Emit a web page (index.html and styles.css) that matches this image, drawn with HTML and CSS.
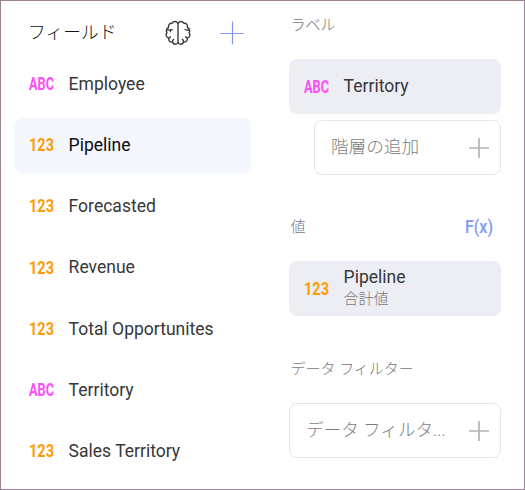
FILE: index.html
```html
<!DOCTYPE html>
<html lang="ja">
<head>
<meta charset="utf-8">
<title>フィールド</title>
<link rel="stylesheet" href="styles.css">
</head>
<body>
<div class="app">
  <section class="fields">
    <header class="fields-head">
      <h1 class="title">フィールド</h1>
      <svg class="brain" viewBox="0 0 26 26" fill="none" stroke="#3a3a3c" stroke-width="1.4" stroke-linecap="round" stroke-linejoin="round">
        <path d="M13 3.8V22.2M13 3.8C12 .9 8.4.7 7.2 3.3C4.6 3 3 5.2 3.6 7.5C1.4 8.3.7 10.8 1.9 12.5C.4 14.6 1.2 17.4 3.6 18.1C3.4 20.7 5.2 22.5 7.5 22.1C8.7 24.9 12 24.8 13 22.2C14 24.8 17.3 24.9 18.5 22.1C20.8 22.5 22.6 20.7 22.4 18.1C24.8 17.4 25.6 14.6 24.1 12.5C25.3 10.8 24.6 8.3 22.4 7.5C23 5.2 21.4 3 18.8 3.3C17.6.7 14 .9 13 3.8"/>
        <path d="M2.3 10.1C3.8 9.9 5.4 9.9 7.2 9.7M5.6 9.9L5.4 11.7M23.7 10.1C22.2 10.4 21.2 10.2 20 9.5M3.6 18.1C4.4 17.9 4.9 17.5 5.3 16.8M22.4 18.1C21.6 17.9 21.1 17.5 20.7 16.8M7.5 22.1C7.3 20.8 7.7 19.9 8.7 19.4M18.5 22.1C18.7 20.8 18.3 19.9 17.3 19.4"/>
      </svg>
      <svg class="plus-blue" viewBox="0 0 24 24"><path d="M.5 12.5H23.5M12.5 .5V23.5" stroke="#8299f0" stroke-width="1.2"/></svg>
    </header>
    <ul class="list">
      <li class="item"><svg class="type abc" viewBox="0 0 26 20"><text x="0" y="15" textLength="25" lengthAdjust="spacingAndGlyphs">ABC</text></svg><span class="name">Employee</span></li>
      <li class="item selected"><svg class="type num" viewBox="0 0 26 20"><text x="0" y="15" textLength="25" lengthAdjust="spacingAndGlyphs">123</text></svg><span class="name">Pipeline</span></li>
      <li class="item"><svg class="type num" viewBox="0 0 26 20"><text x="0" y="15" textLength="25" lengthAdjust="spacingAndGlyphs">123</text></svg><span class="name">Forecasted</span></li>
      <li class="item"><svg class="type num" viewBox="0 0 26 20"><text x="0" y="15.5" textLength="25" lengthAdjust="spacingAndGlyphs">123</text></svg><span class="name">Revenue</span></li>
      <li class="item"><svg class="type num" viewBox="0 0 26 20"><text x="0" y="15.5" textLength="25" lengthAdjust="spacingAndGlyphs">123</text></svg><span class="name">Total Opportunites</span></li>
      <li class="item"><svg class="type abc" viewBox="0 0 26 20"><text x="0" y="15.5" textLength="25" lengthAdjust="spacingAndGlyphs">ABC</text></svg><span class="name">Territory</span></li>
      <li class="item"><svg class="type num" viewBox="0 0 26 20"><text x="0" y="15.5" textLength="25" lengthAdjust="spacingAndGlyphs">123</text></svg><span class="name">Sales Territory</span></li>
    </ul>
  </section>
  <section class="editor">
    <h2 class="label">ラベル</h2>
    <div class="card"><svg class="type abc" viewBox="0 0 26 20"><text x="0" y="15.5" textLength="25" lengthAdjust="spacingAndGlyphs">ABC</text></svg><span class="name">Territory</span></div>
    <div class="drop nested"><span class="hint">階層の追加</span><svg class="plus" viewBox="0 0 20 20"><path d="M0 10H20M10 0V20" stroke="#b4b4b4" stroke-width="1.7"/></svg></div>
    <div class="values-head">
      <h2 class="label">値</h2>
      <svg class="fx" viewBox="0 0 29 24"><text x="0" y="18" textLength="28" lengthAdjust="spacingAndGlyphs">F(x)</text></svg>
    </div>
    <div class="card"><svg class="type num" viewBox="0 0 26 20"><text x="0" y="15.5" textLength="25" lengthAdjust="spacingAndGlyphs">123</text></svg><div class="stack"><span class="name">Pipeline</span><span class="sub">合計値</span></div></div>
    <h2 class="label filter-label">データ フィルター</h2>
    <div class="drop"><span class="hint">データ フィルタ...</span><svg class="plus" viewBox="0 0 20 20"><path d="M0 10H20M10 0V20" stroke="#b4b4b4" stroke-width="1.7"/></svg></div>
  </section>
</div>
</body>
</html>
```
FILE: styles.css
```css
* { box-sizing: border-box; }
body {
  margin: 0;
  font-family: Roboto, "Noto Sans CJK JP", sans-serif;
  color: #37373a;
}
svg { display: block; flex: none; overflow: visible; }
h1, h2, ul { margin: 0; padding: 0; }
.app {
  display: flex;
  gap: 38px;
  width: 525px;
  height: 490px;
  padding: 0 23px 0 13px;
  border: 1px solid #978391;
  background: #fff;
  overflow: hidden;
}
.fields { width: 237px; }
.fields-head {
  display: flex;
  align-items: center;
  height: 55px;
  padding: 9px 7px 0 14px;
}
.title {
  flex: 1;
  font-size: 17.8px;
  font-weight: 300;
  line-height: 26px;
  color: #111114;
  white-space: nowrap;
}
.brain { width: 26px; height: 26px; margin-right: 29px; }
.plus-blue { width: 24px; height: 24px; }
.list {
  display: flex;
  flex-direction: column;
  gap: 6.15px;
  list-style: none;
  padding-top: 1px;
}
.item, .card {
  display: flex;
  align-items: center;
  height: 55px;
  padding: 0 15px;
  gap: 13.6px;
  border-radius: 8px;
}
.selected { background: #f4f7fe; color: #0b0b0f; }
.type { width: 26px; height: 20px; }
.type text, .fx text {
  font-family: Roboto, sans-serif;
  font-size: 17.5px;
  font-weight: 700;
}
.abc text { fill: #fb50f5; }
.num text { fill: #ff9c08; }
.name {
  font-size: 17.55px;
  line-height: 21px;
  white-space: nowrap;
}
.editor { width: 212px; }
.label {
  font-size: 15px;
  font-weight: 300;
  line-height: 22px;
  padding-left: 1.5px;
  color: #77777c;
}
.editor > .label:first-child { margin: 13px 0 23px; }
.card { background: #edeef4; }
.drop {
  display: flex;
  align-items: center;
  justify-content: space-between;
  height: 55px;
  padding: 0 11px 0 16px;
  border: 1px solid #e6e6e8;
  border-radius: 8px;
}
.nested { margin: 6px 0 0 25px; }
.hint {
  font-size: 17.6px;
  font-weight: 300;
  line-height: 24px;
  padding-bottom: 2px;
  color: #7d7d80;
  white-space: nowrap;
}
.plus { width: 20px; height: 20px; }
.values-head {
  display: flex;
  align-items: center;
  justify-content: space-between;
  height: 24px;
  margin: 40px 7px 22px 0;
}
.fx { width: 29px; height: 24px; }
.fx text { fill: #889ef5; font-size: 19px; font-weight: 600; }
.stack { display: flex; flex-direction: column; }
.sub { font-size: 15px; font-weight: 300; line-height: 22px; color: #77777c; }
.filter-label { margin: 42px 0 23px; }
```
